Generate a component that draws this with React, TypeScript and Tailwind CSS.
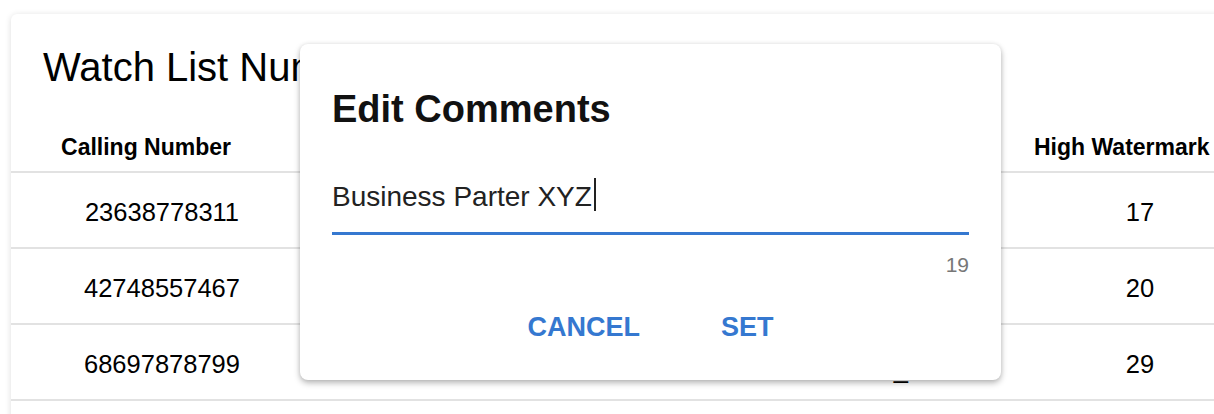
const rows = [
  { number: '23638778311', comment: '', extra: '', high: '17' },
  { number: '42748557467', comment: '', extra: '', high: '20' },
  { number: '68697878799', comment: '', extra: 'Line_', high: '29' }
];

export default function App() {
  return (
    <div className="relative w-[1214px] h-[414px] overflow-hidden bg-white font-['Liberation_Sans',Arial,sans-serif] text-black">
      {/* table card */}
      <div className="pt-[14px] pl-[11px]">
        <div className="w-[1260px] h-[460px] bg-white rounded-[6px] shadow-[0_1px_6px_rgba(0,0,0,0.14)]">
          <h1 className="pt-[33px] pl-[32px] text-[40px] leading-none font-normal">
            Watch List Numbers
          </h1>

          <div className="mt-[31px] grid grid-cols-[302px_350px_355px_244px]">
            {/* header */}
            <div className="h-[55px] border-b-2 border-[#e2e2e2] pr-[32px] pt-[5px] flex items-center justify-center text-[23px] font-bold">
              Calling Number
            </div>
            <div className="h-[55px] border-b-2 border-[#e2e2e2] flex items-center justify-center text-[23px] font-bold">
              Comments
            </div>
            <div className="h-[55px] border-b-2 border-[#e2e2e2] flex items-center justify-center text-[23px] font-bold">
              Current Calls
            </div>
            <div className="h-[55px] border-b-2 border-[#e2e2e2] pl-[16px] pt-[5px] flex items-center text-[23px] font-bold whitespace-nowrap">
              High Watermark
            </div>

            {/* rows */}
            {rows.map((r) => (
              <div key={r.number} className="contents">
                <div className="h-[76px] border-b-2 border-[#e2e2e2] pt-[4px] flex items-center justify-center text-[25.5px]">
                  {r.number}
                </div>
                <div className="h-[76px] border-b-2 border-[#e2e2e2] pt-[4px] flex items-center justify-center text-[25.5px]">
                  {r.comment}
                </div>
                <div className="h-[76px] border-b-2 border-[#e2e2e2] pt-[14px] pr-[110px] flex items-center justify-end text-[25.5px]">
                  {r.extra}
                </div>
                <div className="h-[76px] border-b-2 border-[#e2e2e2] pt-[4px] flex items-center justify-center text-[25.5px]">
                  {r.high}
                </div>
              </div>
            ))}
          </div>
        </div>
      </div>

      {/* dialog */}
      <div className="absolute left-[300px] top-[44px] w-[701px] h-[336px] bg-white rounded-[8px] px-[32px] pt-[46px] shadow-[0_3px_6px_rgba(0,0,0,0.28),0_0_4px_rgba(0,0,0,0.08)]">
        <h2 className="text-[38px] leading-none font-bold text-[#111]">Edit Comments</h2>

        <div className="mt-[50px] h-[33px] flex items-end">
          <span className="text-[28px] leading-none text-[#222]">Business Parter XYZ</span>
          <span className="ml-[2px] w-[2px] h-[33px] bg-[#222]" />
        </div>
        <div className="mt-[21px] h-[3px] bg-[#3578d0]" />
        <div className="mt-[19px] text-right text-[21px] leading-none text-[#777]">19</div>

        <div className="mt-[39px] flex justify-center gap-[81px]">
          <button className="text-[27px] leading-none font-bold text-[#3578d0]">CANCEL</button>
          <button className="text-[27px] leading-none font-bold text-[#3578d0]">SET</button>
        </div>
      </div>
    </div>
  );
}
